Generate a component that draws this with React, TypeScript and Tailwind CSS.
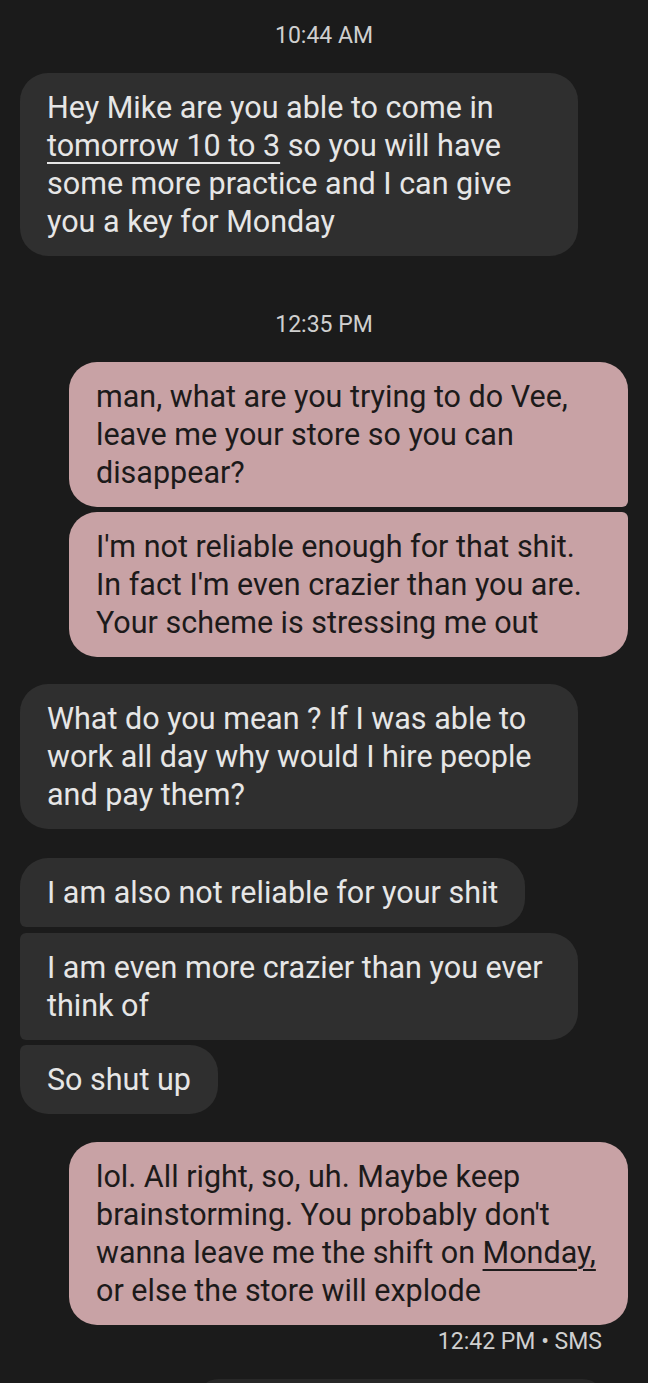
import React from "react";

const font = { fontFamily: "Roboto, 'Noto Sans', sans-serif" };

function Dark({
  children,
  className = "",
  wide = false,
}: {
  children: React.ReactNode;
  className?: string;
  wide?: boolean;
}) {
  return (
    <div
      className={`${wide ? "w-[558px]" : "w-fit"} bg-[#2f2f2f] text-[#e6e6e6] text-[30.5px] leading-[38px] px-[27px] pt-4 pb-[15px] ${className}`}
    >
      {children}
    </div>
  );
}

function Pink({ children, className = "" }: { children: React.ReactNode; className?: string }) {
  return (
    <div
      className={`self-end w-[559px] bg-[#c8a2a5] text-[#1c1a1a] text-[30.5px] leading-[38px] pl-[27px] pr-[12px] pt-4 pb-[15px] ${className}`}
    >
      {children}
    </div>
  );
}

function Stamp({ children, className = "" }: { children: React.ReactNode; className?: string }) {
  return (
    <div className={`text-center text-[23px] leading-[28px] text-[#cfcfcf] ${className}`}>{children}</div>
  );
}

export default function App() {
  return (
    <div className="w-[648px] h-[1383px] overflow-hidden bg-[#1b1b1b]" style={font}>
      <div className="flex flex-col pt-[22px] pl-[20px] pr-[20px]">
        <Stamp>10:44 AM</Stamp>
        <Dark wide className="mt-[23px] pb-4 rounded-[28px]">
          Hey Mike are you able to come in
          <br />
          <span className="underline decoration-[2px] underline-offset-[6px]">tomorrow 10 to 3</span> so you will have
          <br />
          some more practice and I can give
          <br />
          you a key for Monday
        </Dark>

        <Stamp className="mt-[55px]">12:35 PM</Stamp>
        <Pink className="mt-[23px] pb-4 rounded-[28px] rounded-br-[6px]">
          man, what are you trying to do Vee,
          <br />
          leave me your store so you can
          <br />
          disappear?
        </Pink>
        <Pink className="mt-[5px] rounded-[28px] rounded-tr-[6px]">
          I'm not reliable enough for that shit.
          <br />
          In fact I'm even crazier than you are.
          <br />
          Your scheme is stressing me out
        </Pink>

        <Dark wide className="mt-[27px] rounded-[28px]">
          What do you mean ? If I was able to
          <br />
          work all day why would I hire people
          <br />
          and pay them?
        </Dark>

        <Dark className="mt-[29px] pb-[14px] rounded-[28px] rounded-bl-[6px]">I am also not reliable for your shit</Dark>
        <Dark wide className="mt-[6px] pb-[15px] rounded-[28px] rounded-tl-[6px] rounded-bl-[6px]">
          I am even more crazier than you ever
          <br />
          think of
        </Dark>
        <Dark className="mt-[5px] rounded-[28px] rounded-tl-[6px]">So shut up</Dark>

        <Pink className="mt-[28px] rounded-[28px]">
          lol. All right, so, uh. Maybe keep
          <br />
          brainstorming. You probably don't
          <br />
          wanna leave me the shift on{" "}
          <span className="underline decoration-[2px] underline-offset-[6px]">Monday,</span>
          <br />
          or else the store will explode
        </Pink>
        <div className="self-end mt-[3px] pr-[26px] text-[23px] leading-[28px] text-[#cfcfcf]">12:42 PM • SMS</div>
        <div className="mt-[23px] ml-[178px] w-[405px] h-[20px] rounded-t-[24px] bg-[#282828]" />
      </div>
    </div>
  );
}
